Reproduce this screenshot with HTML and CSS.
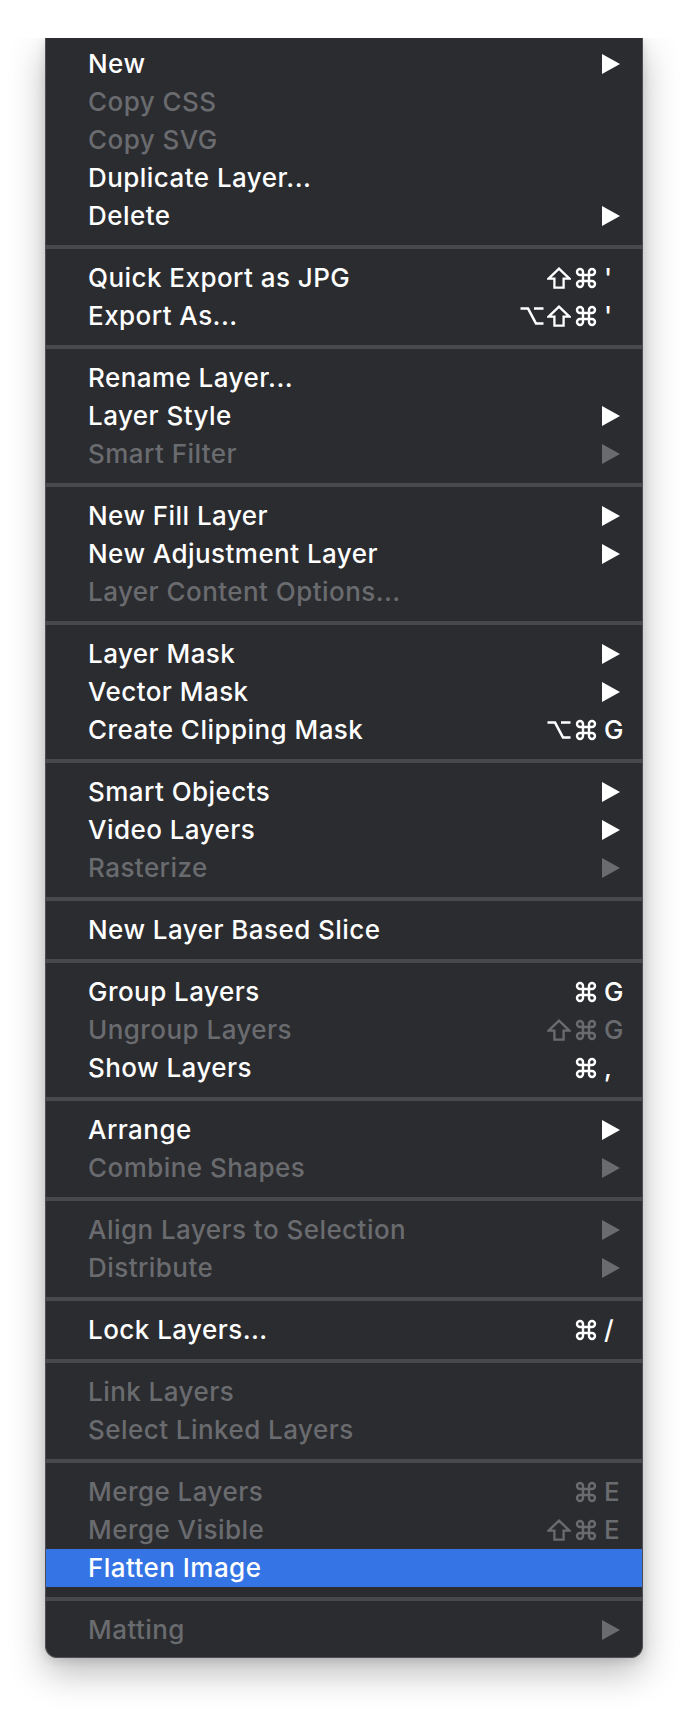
FILE: index.html
```html
<!DOCTYPE html>
<html lang="en">
<head>
    <meta charset="UTF-8">
    <meta name="viewport" content="width=device-width, initial-scale=1.0">
    <title>Layer Menu</title>
    <link rel="stylesheet" href="styles.css">
</head>
<body>
    <!-- modifier key glyphs, reused below -->
    <svg class="defs" aria-hidden="true">
        <symbol id="shift" viewBox="0 0 24 22">
            <path d="M12 1.6 L22.4 11.6 H16.6 V20.6 H7.4 V11.6 H1.6 Z"/>
        </symbol>
        <symbol id="cmd" viewBox="0 0 24 24">
            <path d="M15 6v12a3 3 0 1 0 3-3H6a3 3 0 1 0 3 3V6a3 3 0 1 0-3 3h12a3 3 0 1 0-3-3"/>
        </symbol>
        <symbol id="opt" viewBox="0 0 24 20">
            <path d="M0.5 2.5 H8 L16 17.5 H23.5 M14 2.5 H23.5"/>
        </symbol>
    </svg>

    <div class="frame">
        <div class="menu">
            <div class="item"><span class="label">New</span><span class="arrow"></span></div>
            <div class="item disabled"><span class="label">Copy CSS</span></div>
            <div class="item disabled"><span class="label">Copy SVG</span></div>
            <div class="item"><span class="label">Duplicate Layer...</span></div>
            <div class="item"><span class="label">Delete</span><span class="arrow"></span></div>
            <div class="sep"></div>

            <div class="item">
                <span class="label">Quick Export as JPG</span>
                <span class="keys">
                    <svg class="mod shift"><use href="#shift"/></svg>
                    <svg class="mod cmd"><use href="#cmd"/></svg>
                    <span class="key">'</span>
                </span>
            </div>
            <div class="item">
                <span class="label">Export As...</span>
                <span class="keys">
                    <svg class="mod opt"><use href="#opt"/></svg>
                    <svg class="mod shift"><use href="#shift"/></svg>
                    <svg class="mod cmd"><use href="#cmd"/></svg>
                    <span class="key">'</span>
                </span>
            </div>
            <div class="sep"></div>

            <div class="item"><span class="label">Rename Layer...</span></div>
            <div class="item"><span class="label">Layer Style</span><span class="arrow"></span></div>
            <div class="item disabled"><span class="label">Smart Filter</span><span class="arrow"></span></div>
            <div class="sep"></div>

            <div class="item"><span class="label">New Fill Layer</span><span class="arrow"></span></div>
            <div class="item"><span class="label">New Adjustment Layer</span><span class="arrow"></span></div>
            <div class="item disabled"><span class="label">Layer Content Options...</span></div>
            <div class="sep"></div>

            <div class="item"><span class="label">Layer Mask</span><span class="arrow"></span></div>
            <div class="item"><span class="label">Vector Mask</span><span class="arrow"></span></div>
            <div class="item">
                <span class="label">Create Clipping Mask</span>
                <span class="keys">
                    <svg class="mod opt"><use href="#opt"/></svg>
                    <svg class="mod cmd"><use href="#cmd"/></svg>
                    <span class="key">G</span>
                </span>
            </div>
            <div class="sep"></div>

            <div class="item"><span class="label">Smart Objects</span><span class="arrow"></span></div>
            <div class="item"><span class="label">Video Layers</span><span class="arrow"></span></div>
            <div class="item disabled"><span class="label">Rasterize</span><span class="arrow"></span></div>
            <div class="sep"></div>

            <div class="item"><span class="label">New Layer Based Slice</span></div>
            <div class="sep"></div>

            <div class="item">
                <span class="label">Group Layers</span>
                <span class="keys">
                    <svg class="mod cmd"><use href="#cmd"/></svg>
                    <span class="key">G</span>
                </span>
            </div>
            <div class="item disabled">
                <span class="label">Ungroup Layers</span>
                <span class="keys">
                    <svg class="mod shift"><use href="#shift"/></svg>
                    <svg class="mod cmd"><use href="#cmd"/></svg>
                    <span class="key">G</span>
                </span>
            </div>
            <div class="item">
                <span class="label">Show Layers</span>
                <span class="keys">
                    <svg class="mod cmd"><use href="#cmd"/></svg>
                    <span class="key">,</span>
                </span>
            </div>
            <div class="sep"></div>

            <div class="item"><span class="label">Arrange</span><span class="arrow"></span></div>
            <div class="item disabled"><span class="label">Combine Shapes</span><span class="arrow"></span></div>
            <div class="sep"></div>

            <div class="item disabled"><span class="label">Align Layers to Selection</span><span class="arrow"></span></div>
            <div class="item disabled"><span class="label">Distribute</span><span class="arrow"></span></div>
            <div class="sep"></div>

            <div class="item">
                <span class="label">Lock Layers...</span>
                <span class="keys">
                    <svg class="mod cmd"><use href="#cmd"/></svg>
                    <span class="key">/</span>
                </span>
            </div>
            <div class="sep"></div>

            <div class="item disabled"><span class="label">Link Layers</span></div>
            <div class="item disabled"><span class="label">Select Linked Layers</span></div>
            <div class="sep"></div>

            <div class="item disabled">
                <span class="label">Merge Layers</span>
                <span class="keys">
                    <svg class="mod cmd"><use href="#cmd"/></svg>
                    <span class="key">E</span>
                </span>
            </div>
            <div class="item disabled">
                <span class="label">Merge Visible</span>
                <span class="keys">
                    <svg class="mod shift"><use href="#shift"/></svg>
                    <svg class="mod cmd"><use href="#cmd"/></svg>
                    <span class="key">E</span>
                </span>
            </div>
            <div class="item active"><span class="label">Flatten Image</span></div>
            <div class="sep"></div>

            <div class="item disabled"><span class="label">Matting</span><span class="arrow"></span></div>
        </div>
    </div>
</body>
</html>
```

FILE: styles.css
```css
:root {
    --menu-bg: #2b2c30;
    --menu-border: #505155;
    --sep-color: #48494d;
    --text-color: #ffffff;
    --text-disabled: #6a6b6f;
    --highlight: #3474e4;
}

* {
    margin: 0;
    padding: 0;
    box-sizing: border-box;
}

body {
    background: #ffffff;
    font-family: 'Inter', 'Liberation Sans', sans-serif;
}

.defs {
    display: none;
}

/* clips the shadow so nothing shows above the menu */
.frame {
    margin-top: 38px;
    padding: 0 47px 54px 45px;
    overflow: hidden;
}

.menu {
    width: 598px;
    background: var(--menu-bg);
    border: 1px solid var(--menu-border);
    border-top: none;
    border-radius: 0 0 12px 12px;
    padding: 7px 0 8px;
    box-shadow: 0 14px 36px rgba(0, 0, 0, 0.28), 0 2px 10px rgba(0, 0, 0, 0.12);
}

.item {
    display: flex;
    align-items: center;
    justify-content: space-between;
    height: 38px;
    padding: 0 18px 0 42px;
    color: var(--text-color);
    font-size: 26px;
    font-weight: 500;
    letter-spacing: 0.45px;
    line-height: 38px;
    white-space: nowrap;
}

.item.disabled {
    color: var(--text-disabled);
}

.item.active {
    background: var(--highlight);
}

.arrow {
    width: 0;
    height: 0;
    margin-right: 4px;
    border-top: 10px solid transparent;
    border-bottom: 10px solid transparent;
    border-left: 18px solid currentColor;
}

.keys {
    display: flex;
    align-items: center;
    gap: 3px;
}

.mod {
    fill: none;
    stroke: currentColor;
    stroke-width: 2.5;
    stroke-linejoin: miter;
}

.mod.shift {
    width: 24px;
    height: 22px;
    stroke-width: 2.3;
}

.mod.cmd {
    width: 24px;
    height: 24px;
    stroke-width: 2.4;
}

.mod.opt {
    width: 24px;
    height: 20px;
    stroke-width: 2.6;
}

.key {
    display: inline-block;
    width: 20px;
    margin-left: 3px;
    text-align: left;
    letter-spacing: 0;
}

.sep {
    height: 4px;
    margin: 10px 0;
    background: var(--sep-color);
}
```
